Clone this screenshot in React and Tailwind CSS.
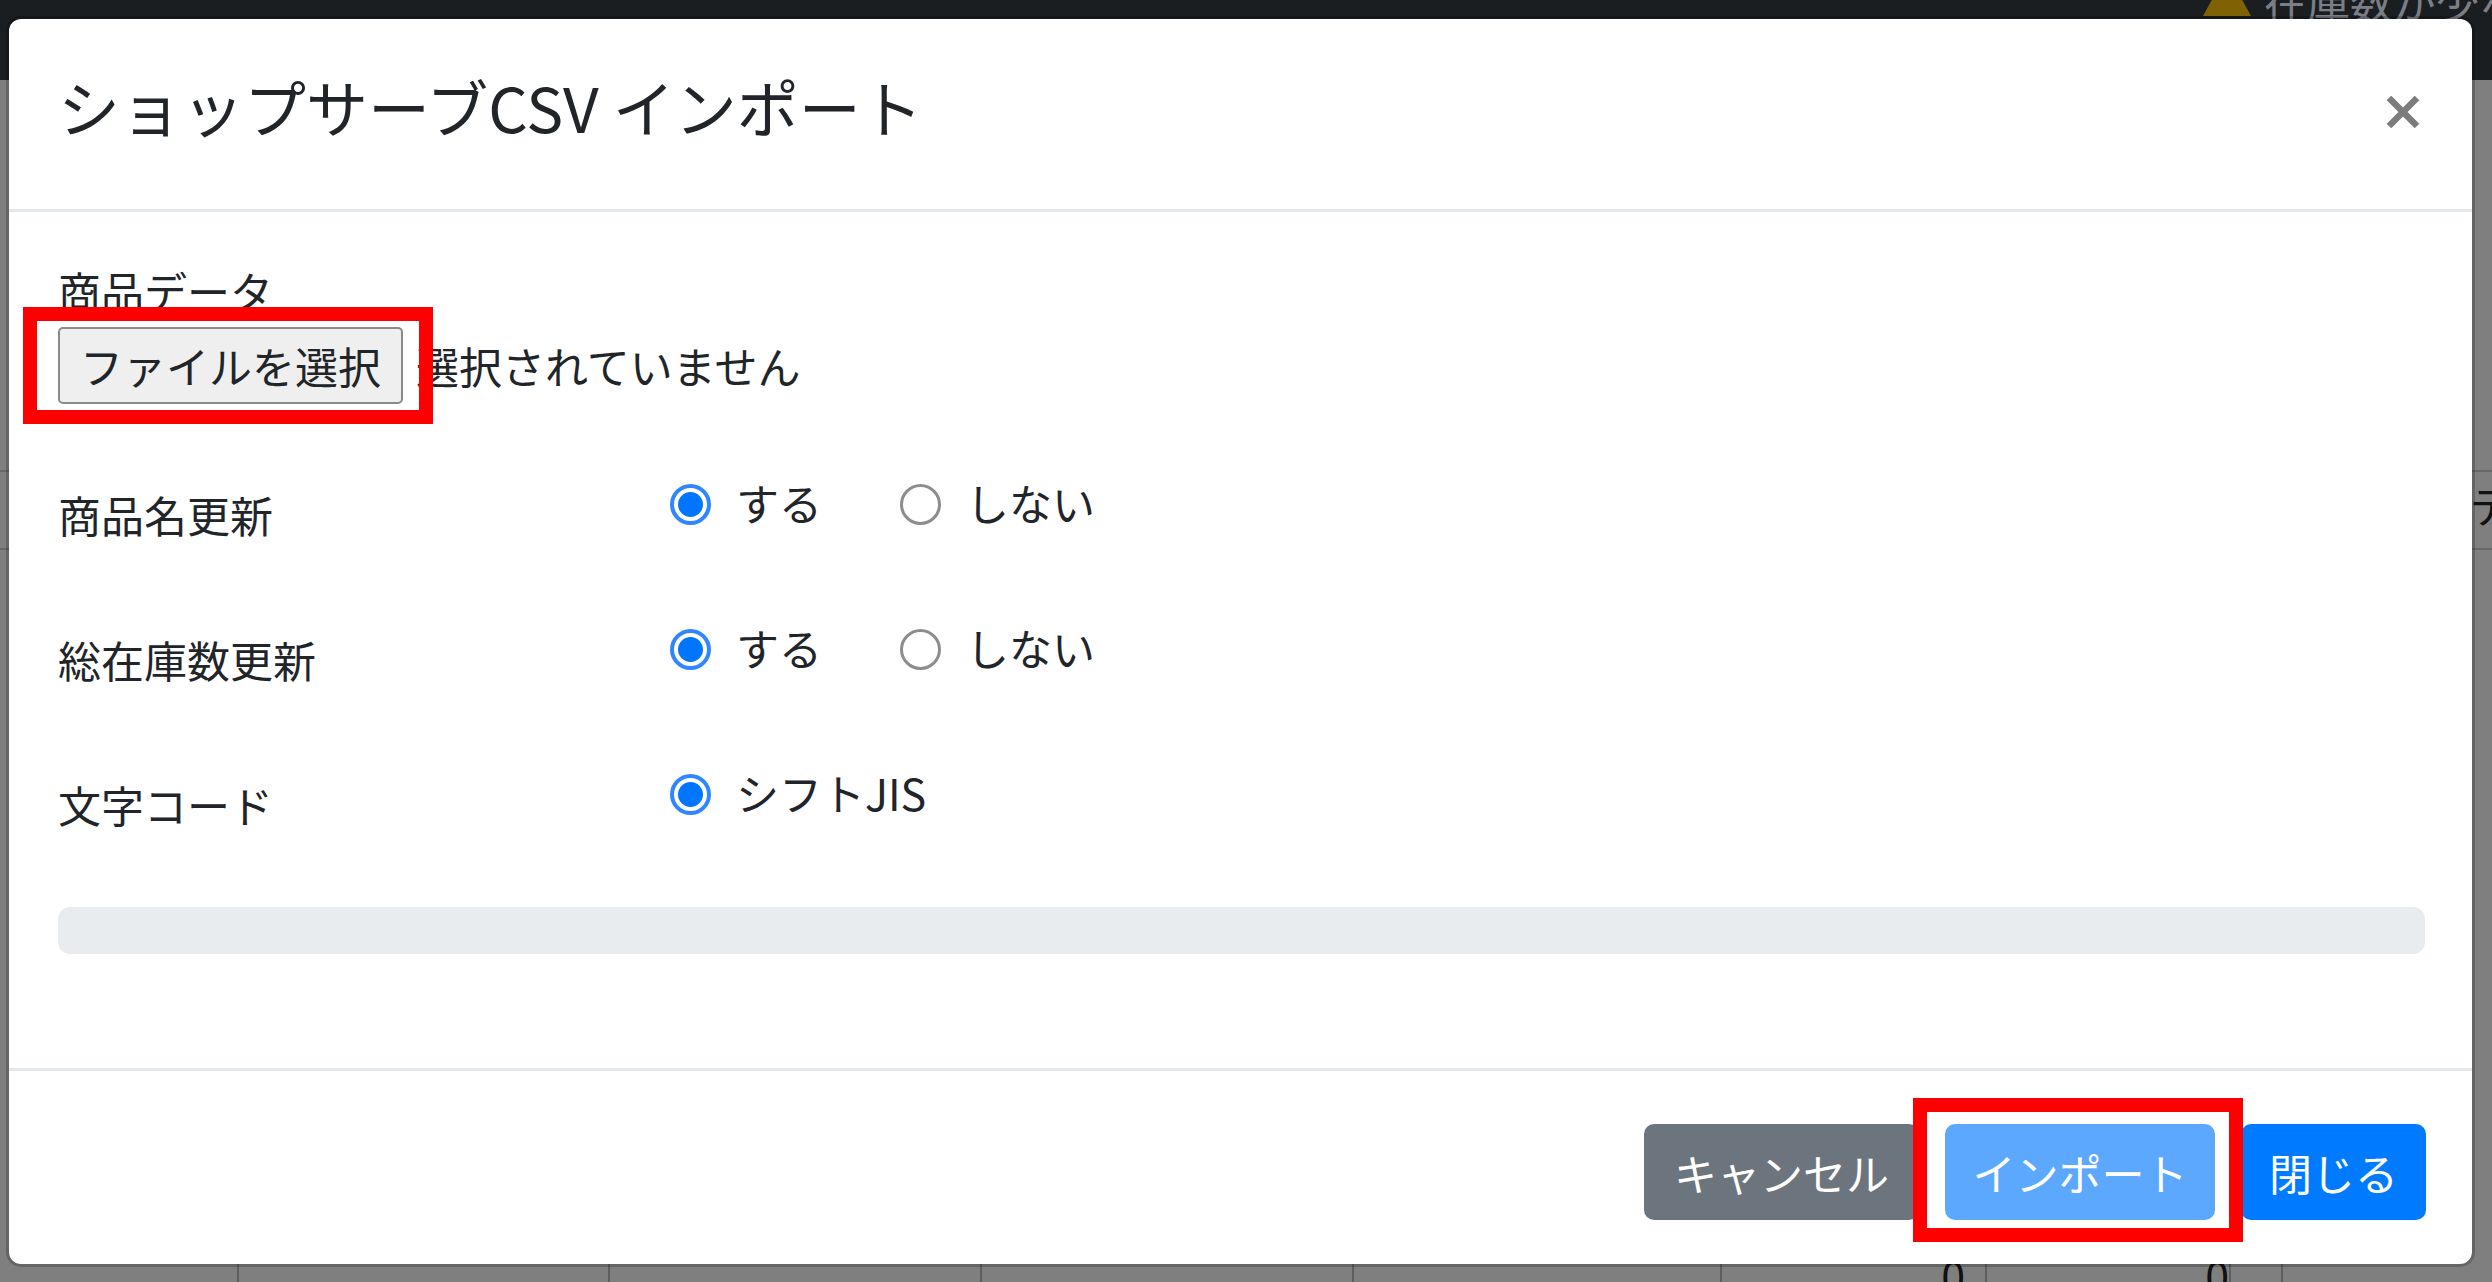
import React from "react";

function Radio({ checked }) {
  return checked ? (
    <span className="w-[41px] h-[41px] shrink-0 rounded-full border-[4px] border-[#2f86ff] bg-white flex items-center justify-center">
      <span className="w-[25px] h-[25px] rounded-full bg-[#0075ff]" />
    </span>
  ) : (
    <span className="w-[41px] h-[41px] shrink-0 rounded-full border-[3px] border-[#8d8d8d] bg-white" />
  );
}

function RadioItem({ checked, label, className = "" }) {
  return (
    <div className={"flex items-center h-[65px] " + className}>
      <Radio checked={checked} />
      <span className="ml-[25px] pb-[5px] leading-[65px]">{label}</span>
    </div>
  );
}

function Row({ label, children }) {
  return (
    <div className="flex h-[145px]">
      <div className="w-[612px] shrink-0 pt-[22px] leading-[65px]">{label}</div>
      <div className="pt-[12px] flex items-start">{children}</div>
    </div>
  );
}

export default function App() {
  return (
    <div className="relative w-[2492px] h-[1282px] overflow-hidden bg-[#7f7f7f] font-['Noto_Sans_CJK_JP','Noto_Sans',sans-serif] text-[43px] text-[#212529]">
      {/* underlying page (behind backdrop) */}
      <div className="h-[80px] bg-[#1b1e21] flex items-start pl-[2203px]">
        <div className="flex items-start -mt-[32px]">
          <svg width="48" height="44" viewBox="0 0 48 44" className="mt-[4px] shrink-0">
            <polygon points="24,0 48,44 0,44" fill="#7f6204" />
          </svg>
          <span className="ml-[13px] leading-[65px] text-[#7a7f85] whitespace-nowrap">在庫数が少ない商品</span>
        </div>
      </div>
      <div className="h-[390px]" />
      <div className="h-[78px] border-t-[2px] border-[#686868] flex">
        <span className="pl-[2470px] leading-[65px] text-[#111] whitespace-nowrap">データ</span>
      </div>
      <div className="h-[694px] border-t-[2px] border-[#686868]" />
      <div className="flex h-[60px] leading-[65px] text-[#111]">
        <div className="w-[239px] border-r-[2px] border-[#5f5f5f]" />
        <div className="w-[371px] border-r-[2px] border-[#5f5f5f]" />
        <div className="w-[372px] border-r-[2px] border-[#5f5f5f]" />
        <div className="w-[372px] border-r-[2px] border-[#5f5f5f]" />
        <div className="w-[368px] border-r-[2px] border-[#5f5f5f]" />
        <div className="w-[265px] border-r-[2px] border-[#5f5f5f] flex justify-end pr-[20px]">0</div>
        <div className="w-[244px] border-r-[2px] border-[#5f5f5f] flex justify-end">0</div>
        <div className="w-[52px] border-r-[2px] border-[#5f5f5f]" />
      </div>

      {/* modal */}
      <div className="absolute left-[6px] top-[16px] w-[2469px] h-[1251px] bg-white bg-clip-padding border-[3px] border-[rgba(0,0,0,0.2)] rounded-[15px] flex flex-col">
        <div className="h-[193px] shrink-0 border-b-[3px] border-[#e3e6ea] flex items-start justify-between pl-[49px] pr-[52px] pt-[41px]">
          <h5 className="text-[62px] leading-[93px] font-normal text-[#212529]">ショップサーブCSV インポート</h5>
          <svg width="34" height="34" viewBox="0 0 34 34" className="mt-[35px]">
            <path d="M3 3 L31 31 M31 3 L3 31" stroke="#7c7c7c" strokeWidth="6.5" />
          </svg>
        </div>

        <div className="flex-1 px-[49px] pt-[46px] flex flex-col">
          <div className="leading-[65px]">商品データ</div>
          <div className="mt-[4px] flex items-center">
            <div className="w-[345px] h-[77px] bg-[#efefef] border-[2px] border-[#8a8a8a] rounded-[5px] flex items-center justify-center leading-[65px]">
              ファイルを選択
            </div>
            <span className="ml-[13px] leading-[65px]">選択されていません</span>
          </div>

          <div className="mt-[56px]">
            <Row label="商品名更新">
              <RadioItem checked label="する" />
              <RadioItem label="しない" className="ml-[78px]" />
            </Row>
            <Row label="総在庫数更新">
              <RadioItem checked label="する" />
              <RadioItem label="しない" className="ml-[78px]" />
            </Row>
            <Row label="文字コード">
              <RadioItem checked label="シフトJIS" />
            </Row>
          </div>

          <div className="mt-[12px] h-[47px] w-[2367px] rounded-[12px] bg-[#e9ecef]" />
        </div>

        <div className="h-[196px] shrink-0 border-t-[3px] border-[#e3e6ea] flex justify-end items-start pt-[53px] pr-[46px] gap-[26px]">
          <div className="w-[275px] h-[96px] rounded-[10px] bg-[#6c757d] text-white flex items-center justify-center">キャンセル</div>
          <div className="w-[270px] h-[96px] rounded-[10px] bg-[#5ca8ff] text-white flex items-center justify-center">インポート</div>
          <div className="w-[185px] h-[96px] rounded-[10px] bg-[#007bff] text-white flex items-center justify-center">閉じる</div>
        </div>
      </div>

      {/* red annotation boxes */}
      <div className="absolute left-[23px] top-[307px] w-[410px] h-[117px] border-[14px] border-[#ff0000]" />
      <div className="absolute left-[1913px] top-[1098px] w-[330px] h-[144px] border-[14px] border-[#ff0000]" />
    </div>
  );
}
